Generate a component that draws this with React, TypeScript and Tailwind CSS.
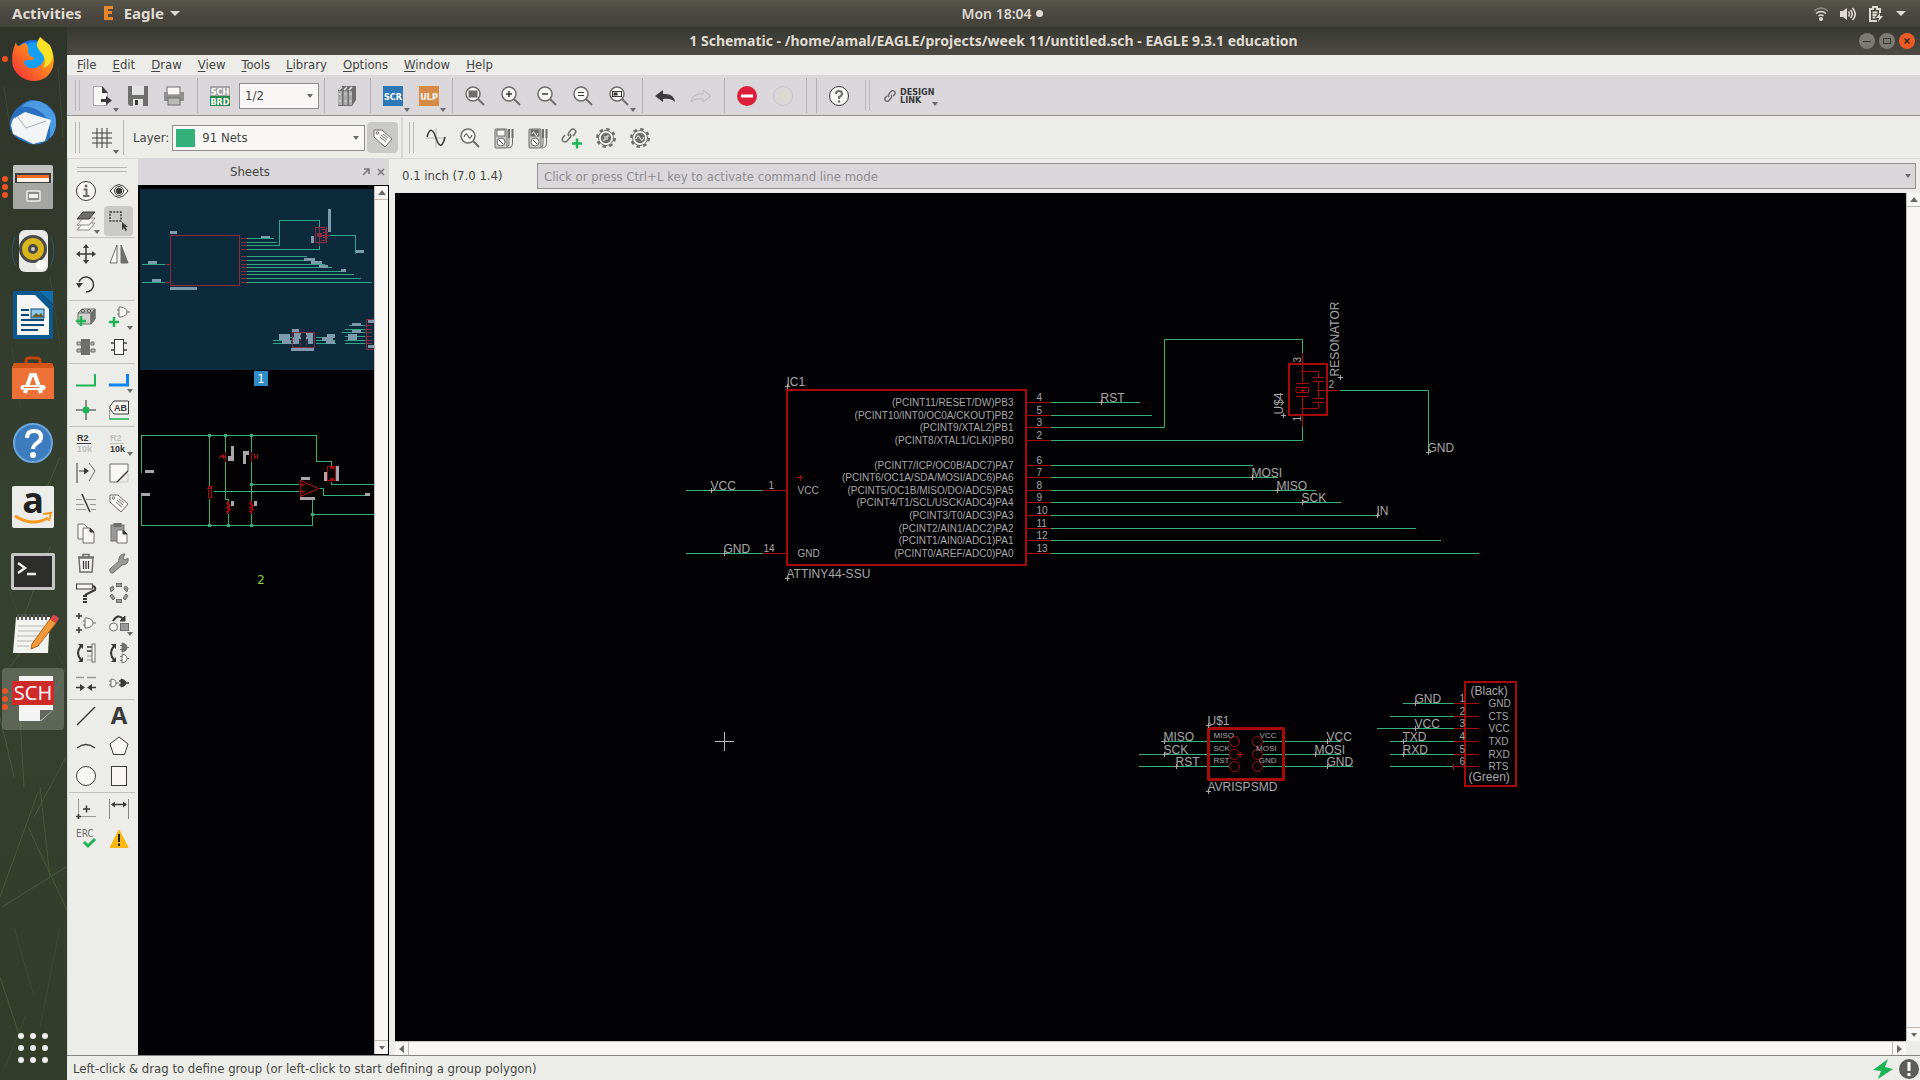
import React from 'react';

interface ChildrenProps {
  children?: React.ReactNode;
}

interface Tool {
  name: string;
  icon: React.ReactNode;
  menu?: boolean;
  active?: boolean;
}

const DARK = '#3a3a3a';
const MID = '#6e6e6c';
const GREEN = '#1eb455';

const Icon: React.FC<ChildrenProps> = ({ children }) => (
  <svg
    viewBox="0 0 20 20"
    className="w-5 h-5 overflow-visible"
    fill="none"
    stroke={DARK}
    strokeWidth="1"
    aria-hidden="true"
  >
    {children}
  </svg>
);

const Arrow: React.FC<{ dir?: 'up' | 'down' | 'left' | 'right' }> = ({
  dir = 'down',
}) => {
  const points = {
    down: '1,2 7,2 4,6',
    up: '0,6 8,6 4,1',
    left: '6,0 6,8 1,4',
    right: '1,0 1,8 6,4',
  };

  return (
    <svg viewBox="0 0 8 8" className="w-2 h-2" aria-hidden="true">
      <polygon points={points[dir]} fill="#6a6a68" />
    </svg>
  );
};

const Magnifier: React.FC<ChildrenProps> = ({ children }) => (
  <Icon>
    <circle cx="8" cy="8" r="7" fill="#f8f7f5" stroke={MID} strokeWidth="1.500" />
    <path d="M13 13l6 6" stroke={MID} strokeWidth="2" />
    {children}
  </Icon>
);

const Tag: React.FC = () => (
  <Icon>
    <path d="M1 2l8 0 10 9-7 8L1 9z" fill="#f8f7f5" stroke={MID} />
    <circle cx="4.500" cy="5" r="1.300" stroke={MID} />
    <path d="M8 7l6 5M7 9l6 5M10 6l5 4" stroke={MID} />
  </Icon>
);

const Meter: React.FC<{ wave?: boolean }> = ({ wave }) => (
  <Icon>
    <rect x="1" y="1" width="12" height="19" rx="1" fill="#c9c8ca" stroke={MID} />
    <rect x="3" y="2" width="8" height="6" fill={wave ? MID : '#f8f7f5'} stroke={MID} />
    {wave && <path d="M4 6q1.500-4 3 0t3-1" stroke="#fff" />}
    <circle cx="7" cy="14" r="4" fill="#f8f7f5" stroke={MID} />
    <path d="M5 12l4 4" />
    <path d="M15 1v9M18.500 1v9" strokeWidth="2" stroke={MID} />
    <path d="M15 10v6q0 3-2 3M18.500 10v5q0 5-5 5" stroke={MID} />
  </Icon>
);

const Gear: React.FC<ChildrenProps> = ({ children }) => (
  <Icon>
    <circle cx="10" cy="10" r="8.500" stroke={MID} strokeWidth="3" strokeDasharray="3.300 3.370" />
    <circle cx="10" cy="10" r="7.500" fill="#f8f7f5" stroke={MID} />
    <circle cx="10" cy="10" r="4.800" fill={MID} stroke={MID} />
    <g stroke="#fff">{children}</g>
  </Icon>
);

const Badge: React.FC<{ text: string; color: string }> = ({ text, color }) => (
  <Icon>
    <rect width="20" height="20" fill={color} stroke="none" />
    <text
      x="10"
      y="14"
      fill="#fff"
      stroke="none"
      textAnchor="middle"
      className="font-['DejaVu_Sans_Condensed'] text-[9px] font-bold"
    >
      {text}
    </text>
  </Icon>
);

const Gate: React.FC<{ x: number; y: number }> = ({ x, y }) => (
  <g transform={`translate(${x} ${y})`} stroke={MID}>
    <path d="M-2 3h2M-2 7h2M8 5h3" />
    <path d="M0 0h2q6 1 6 5t-6 5h-2z" fill="#f8f7f5" />
  </g>
);

const ValueIcon: React.FC<{ top: string; bottom: string }> = ({ top, bottom }) => (
  <Icon>
    <text x="1" y="8" fill={top} stroke="none" className="font-['Liberation_Sans'] text-[9px] font-bold">
      R2
    </text>
    <path d="M1 10.500h14" stroke={top} />
    <text x="1" y="19" fill={bottom} stroke="none" className="font-['Liberation_Sans'] text-[9px] font-bold">
      10k
    </text>
  </Icon>
);

const PALETTE: Tool[][] = [
  [
    {
      name: 'Info',
      icon: (
        <Icon>
          <circle cx="10" cy="10" r="9.500" fill="#f8f7f5" />
          <path d="M7.500 8.500h3V15M7 15h6.500" strokeWidth="2" stroke={MID} />
          <circle cx="10" cy="5" r="1.500" fill={MID} stroke="none" />
        </Icon>
      ),
    },
    {
      name: 'Show',
      icon: (
        <Icon>
          <path d="M1 10q9-13 18 0q-9 13-18 0z" fill="#f8f7f5" />
          <circle cx="10" cy="10" r="4.500" />
          <circle cx="10" cy="10" r="2.800" fill={DARK} />
        </Icon>
      ),
    },
    {
      name: 'Layer settings',
      menu: true,
      icon: (
        <Icon>
          <path d="M7 12h12l-6 7H1z" fill="#f8f7f5" stroke="#8a8a88" />
          <path d="M7 7h12l-6 7H1z" fill="#f8f7f5" stroke="#8a8a88" />
          <path d="M7 1h12l-6 7H1z" fill={MID} />
        </Icon>
      ),
    },
    {
      name: 'Group',
      active: true,
      icon: (
        <Icon>
          <rect x="1" y="1" width="11" height="9" strokeDasharray="2 1.300" strokeWidth="1.500" />
          <path d="M13 11v8l2-2 1.500 3 1.500-1-1.500-3h2.500z" fill={DARK} stroke="none" />
        </Icon>
      ),
    },
  ],
  [
    {
      name: 'Move',
      icon: (
        <Icon>
          <path d="M10 3v14M3 10h14" strokeWidth="1.500" />
          <path d="M10 0l3 4H7zM10 20l3-4H7zM0 10l4-3v6zM20 10l-4-3v6z" fill={DARK} stroke="none" />
        </Icon>
      ),
    },
    {
      name: 'Mirror',
      icon: (
        <Icon>
          <path d="M8 1v18H1z" fill="#f8f7f5" stroke={MID} />
          <path d="M12 1v18h7z" fill={MID} stroke={MID} />
        </Icon>
      ),
    },
    {
      name: 'Rotate',
      icon: (
        <Icon>
          <path d="M3 8a7.500 7.500 0 1 1 7 10" strokeWidth="1.500" />
          <path d="M0 9h7l-4 5z" fill={DARK} stroke="none" />
        </Icon>
      ),
    },
  ],
  [
    {
      name: 'Add part',
      icon: (
        <Icon>
          <path d="M2 6l4-4h13v10l-4 5H2z" fill="#d0cfcf" stroke={MID} />
          <path d="M2 6h13l4-4M15 6v11" stroke={MID} />
          <path d="M15 6l4-4v10l-4 5z" fill={MID} stroke={MID} />
          <ellipse cx="7" cy="4" rx="2" ry="1.200" fill="#fff" />
          <ellipse cx="13" cy="4" rx="2" ry="1.200" fill="#fff" />
          <path d="M0 14h10M5 9v10" stroke={GREEN} strokeWidth="2.500" />
        </Icon>
      ),
    },
    {
      name: 'Add gate',
      menu: true,
      icon: (
        <Icon>
          <Gate x={10} y={0} />
          <path d="M0 15h10M5 10v10" stroke={GREEN} strokeWidth="2.500" />
        </Icon>
      ),
    },
    {
      name: 'Replace part',
      icon: (
        <Icon>
          <path d="M1 5h4v3H1zM1 12h4v3H1zM15 5h3v3h-3zM15 12h4v3h-4z" fill="#b5b5b3" stroke={MID} />
          <rect x="5.500" y="2.500" width="8" height="15" fill={MID} stroke={MID} />
        </Icon>
      ),
    },
    {
      name: 'Part outline',
      icon: (
        <Icon>
          <path d="M2 6h4M2 13h4M14 6h4M14 13h4" strokeWidth="2" stroke={MID} />
          <rect x="5.500" y="2.500" width="9" height="15" fill="#f8f7f5" />
        </Icon>
      ),
    },
  ],
  [
    {
      name: 'Net',
      icon: (
        <Icon>
          <path d="M0 15.500h19V4" stroke={GREEN} strokeWidth="2" />
        </Icon>
      ),
    },
    {
      name: 'Bus',
      menu: true,
      icon: (
        <Icon>
          <path d="M0 15h18.500V4" stroke="#0a84f0" strokeWidth="3" />
        </Icon>
      ),
    },
    {
      name: 'Junction',
      icon: (
        <Icon>
          <path d="M10 0v20M0 10h20" stroke={MID} strokeWidth="1.500" />
          <circle cx="10" cy="10" r="3.500" fill={GREEN} stroke="none" />
        </Icon>
      ),
    },
    {
      name: 'Label',
      icon: (
        <Icon>
          <path d="M5 1h14.500v13H5L1 9V6z" fill="#f8f7f5" />
          <text x="5" y="11" fill={DARK} stroke="none" className="font-['Liberation_Sans'] text-[9px] font-bold">
            AB
          </text>
          <path d="M0 19h20" stroke={GREEN} strokeWidth="1.500" />
          <path d="M0.500 10v8" stroke="#999" />
        </Icon>
      ),
    },
  ],
  [
    { name: 'Name', icon: <ValueIcon top={DARK} bottom="#bfbfbd" /> },
    { name: 'Value', menu: true, icon: <ValueIcon top="#bfbfbd" bottom={DARK} /> },
    {
      name: 'Smash',
      icon: (
        <Icon>
          <path d="M1 0v20M3 8h7" />
          <path d="M8 4.500l5 3.500-5 3.500z" fill={DARK} stroke="none" />
          <path d="M13 0l6 8-6 10" stroke={MID} />
        </Icon>
      ),
    },
    {
      name: 'Miter',
      icon: (
        <Icon>
          <path d="M1 1h18v7l-11 11H1z" fill="#f8f7f5" stroke={MID} />
          <path d="M19 8L8 19" strokeWidth="1.500" />
          <path d="M19 10v9h-9" stroke="#c9c9c5" />
        </Icon>
      ),
    },
    {
      name: 'Split',
      icon: (
        <Icon>
          <path d="M0 6.500h6M10 6.500h10M0 11.500h8M14 11.500h6M0 16.500h10M15 16.500h5" stroke="#999" />
          <path d="M6 1l8 18" strokeWidth="1.500" />
        </Icon>
      ),
    },
    { name: 'Attribute', icon: <Tag /> },
    {
      name: 'Copy',
      icon: (
        <Icon>
          <path d="M2 1h6l4 4v11H2z" fill="#f8f7f5" stroke={MID} />
          <path d="M7 5h7l4 4v11H7z" fill="#f8f7f5" stroke={MID} />
          <path d="M14 5v4h4z" fill={DARK} />
        </Icon>
      ),
    },
    {
      name: 'Paste',
      icon: (
        <Icon>
          <rect x="2" y="2" width="13" height="16" fill="#999" stroke={MID} />
          <rect x="5" y="0.500" width="7" height="3" fill={MID} stroke={MID} />
          <path d="M8 7h6l4 4v9H8z" fill="#f8f7f5" stroke={MID} />
          <path d="M14 7v4h4z" fill={DARK} />
        </Icon>
      ),
    },
    {
      name: 'Delete',
      icon: (
        <Icon>
          <path d="M3 5h14l-1 14H4z" fill="#f8f7f5" stroke={MID} strokeWidth="1.500" />
          <path d="M2 4h16M7 4V1.500h6V4" strokeWidth="1.500" stroke={MID} />
          <path d="M7.500 8v8M10 8v8M12.500 8v8" strokeWidth="1.300" />
        </Icon>
      ),
    },
    {
      name: 'Properties',
      icon: (
        <Icon>
          <path
            d="M1 16L10 8q-1-5 4-7l2 0-2 4 2 2 3-2q1 7-6 7l-9 8q-4 0-3-4z"
            fill="#999"
            stroke={MID}
          />
        </Icon>
      ),
    },
    {
      name: 'Paint',
      icon: (
        <Icon>
          <rect x="0.500" y="1" width="16" height="5" fill="#f8f7f5" />
          <path d="M17 3q3 1 2 4l-10 5" strokeWidth="2" />
          <path d="M9 12v8" strokeWidth="4" strokeDasharray="2 1" />
        </Icon>
      ),
    },
    {
      name: 'Optimize',
      icon: (
        <Icon>
          <g fill="#999" stroke={MID}>
            <rect x="7.500" y="0.500" width="5" height="3" />
            <rect x="7.500" y="16.500" width="5" height="3" />
            <path d="M1 5l3-2 1 3-3 3zM19 5l-3-2-1 3 3 3zM1 13l2-2 3 4-2 2zM19 13l-2-2-3 4 2 2z" />
          </g>
        </Icon>
      ),
    },
    {
      name: 'Invoke',
      icon: (
        <Icon>
          <path d="M0 3h6M3 0v6M0 17h6M3 14v6" strokeWidth="1.500" />
          <Gate x={9} y={5} />
        </Icon>
      ),
    },
    {
      name: 'Replace',
      menu: true,
      icon: (
        <Icon>
          <circle cx="4.500" cy="14" r="4" fill="#f8f7f5" stroke={MID} />
          <rect x="11.500" y="10.500" width="8" height="7" fill="#999" stroke={MID} />
          <path d="M4 8q5-8 10-2" strokeWidth="2" />
          <path d="M16 3v5h-5z" fill={DARK} />
        </Icon>
      ),
    },
    {
      name: 'Pinswap',
      icon: (
        <Icon>
          <path d="M5 3q-6 7 0 14" strokeWidth="2" />
          <path d="M2 1h5v5zM2 19h5v-5z" fill={DARK} stroke="none" />
          <path d="M11 4h5M11 8h5" strokeWidth="1.500" />
          <path d="M11 13h5M11 17h5" stroke="#999" />
          <rect x="16" y="1" width="3" height="18" fill="#f8f7f5" stroke={MID} />
        </Icon>
      ),
    },
    {
      name: 'Gateswap',
      icon: (
        <Icon>
          <path d="M5 3q-6 7 0 14" strokeWidth="2" />
          <path d="M2 1h5v5zM2 19h5v-5z" fill={DARK} stroke="none" />
          <path d="M11 2.500h3M11 6.500h3M18 4.500h2M11 13.500h3M11 17.500h3M18 15.500h2" stroke={MID} />
          <path d="M13 0q5 1 5 4.500t-5 4.500z" fill={MID} stroke={MID} />
          <path d="M13 11q5 1 5 4.500t-5 4.500z" fill="#f8f7f5" stroke={MID} />
        </Icon>
      ),
    },
    {
      name: 'Split net',
      icon: (
        <Icon>
          <path d="M0 4.500h8M11 4.500h9" stroke="#999" strokeWidth="1.500" />
          <path d="M0 14.500h6M14 14.500h6" strokeWidth="1.500" />
          <path d="M4 11l5 3.500-5 3.500zM16 11l-5 3.500 5 3.500z" fill={DARK} stroke="none" />
        </Icon>
      ),
    },
    {
      name: 'Join gates',
      icon: (
        <Icon>
          <path d="M0 8h3M0 12h3M7 10h3" stroke={MID} />
          <path d="M2 6q5 0 5 4t-5 4z" fill="#f8f7f5" stroke={MID} />
          <path d="M10 8h3M10 12h3M17 10h3" strokeWidth="1.500" />
          <path d="M12 6q5 1 5 4t-5 4z" fill={DARK} />
        </Icon>
      ),
    },
  ],
  [
    {
      name: 'Line',
      icon: (
        <Icon>
          <path d="M1 19L19 1" strokeWidth="1.500" />
        </Icon>
      ),
    },
    {
      name: 'Text',
      icon: (
        <Icon>
          <text
            x="10"
            y="18"
            fill={DARK}
            stroke="none"
            textAnchor="middle"
            className="font-['Open_Sans'] text-2xl font-bold"
          >
            A
          </text>
        </Icon>
      ),
    },
    {
      name: 'Arc',
      icon: (
        <Icon>
          <path d="M1 12q9-7 18 0" strokeWidth="1.500" />
        </Icon>
      ),
    },
    {
      name: 'Polygon',
      icon: (
        <Icon>
          <path d="M10 1l9 7-3.500 10.500h-11L1 8z" fill="#f8f7f5" />
        </Icon>
      ),
    },
    {
      name: 'Circle',
      icon: (
        <Icon>
          <circle cx="10" cy="10" r="9.500" fill="#f8f7f5" />
        </Icon>
      ),
    },
    {
      name: 'Rectangle',
      icon: (
        <Icon>
          <rect x="2.500" y="0.500" width="15" height="19" fill="#f8f7f5" />
        </Icon>
      ),
    },
  ],
  [
    {
      name: 'Mark',
      icon: (
        <Icon>
          <path d="M2.500 0v17.500H20" stroke="#999" />
          <path d="M7 10h7M10.500 6.500v7M0 17.500h5M2.500 15v5" strokeWidth="1.500" />
        </Icon>
      ),
    },
    {
      name: 'Dimension',
      icon: (
        <Icon>
          <path d="M0.500 0v20M19.500 0v20" stroke="#888" />
          <path d="M3 5.500h14" strokeWidth="1.500" />
          <path d="M2 5.500l4-3v6zM18 5.500l-4-3v6z" fill={DARK} stroke="none" />
        </Icon>
      ),
    },
    {
      name: 'ERC',
      icon: (
        <Icon>
          <text x="0" y="8" fill={MID} stroke="none" className="font-['DejaVu_Sans_Condensed'] text-[10px]">
            ERC
          </text>
          <path d="M8 13l4 4 7-7" stroke={GREEN} strokeWidth="3" />
        </Icon>
      ),
    },
    {
      name: 'Errors',
      icon: (
        <Icon>
          <path d="M10 1l9 17.500H1z" fill="#fbb80f" stroke="#fbb80f" strokeLinejoin="round" />
          <path d="M10 5v8M10 14.500v2.500" stroke="#222" strokeWidth="2" />
        </Icon>
      ),
    },
  ],
];

const ToolButton: React.FC<Tool> = ({ name, icon, menu, active }) => (
  <button
    type="button"
    aria-label={name}
    className={`relative flex items-center justify-center h-[30px] rounded-sm ${
      active ? 'bg-[#c9c9c5]' : ''
    }`}
  >
    {icon}
    {menu && (
      <span className="absolute -right-px bottom-0">
        <Arrow />
      </span>
    )}
  </button>
);

const BarButton: React.FC<Tool> = ({ name, icon, menu }) => (
  <button type="button" aria-label={name} className="relative flex items-center justify-center w-9 h-9">
    {icon}
    {menu && (
      <span className="absolute right-0 bottom-0">
        <Arrow />
      </span>
    )}
  </button>
);

const Separator: React.FC = () => <div className="w-px h-[35px] mr-1 ml-[5px] bg-[#b3b1b4]" />;

const Handle: React.FC = () => (
  <div className="w-[5px] h-[31px] border-x border-[#b9b8b8]" />
);

const MENUS = ['File', 'Edit', 'Draw', 'View', 'Tools', 'Library', 'Options', 'Window', 'Help'];

const MenuBar: React.FC = () => (
  <nav className="flex items-center gap-4 h-5 px-[10px] bg-[#ecede8]">
    {MENUS.map((menu) => (
      <button key={menu} type="button" className="leading-5">
        <span className="underline underline-offset-2">{menu[0]}</span>
        {menu.slice(1)}
      </button>
    ))}
  </nav>
);

const MainToolbar: React.FC = () => (
  <div className="flex items-center h-[41px] pl-2 pt-px bg-[#d9d7da] border-b border-[#959396]">
    <Handle />
    <div className="flex items-center ml-1">
      <BarButton
        name="Open"
        menu
        icon={
          <Icon>
            <path d="M1.500 0.500h9l5 6v13h-14z" fill="#f8f7f5" stroke="#aaa8ab" />
            <path d="M10 0l6 7h-6zM9 13h5v-3l6 4.500-6 4.500v-3H9z" fill={DARK} stroke="none" />
          </Icon>
        }
      />
      <BarButton
        name="Save"
        icon={
          <Icon>
            <path d="M0 0h20v20H2l-2-2z" fill={MID} stroke="none" />
            <path d="M4 0h12v9H4zM5 13h10v7H5z" fill="#e4e3e4" stroke="none" />
            <path d="M7 14h3v5H7z" fill={DARK} stroke="none" />
          </Icon>
        }
      />
      <BarButton
        name="Print"
        icon={
          <Icon>
            <rect x="3" y="1" width="13" height="8" fill="#f8f7f5" stroke={MID} />
            <path d="M0 6h4v3h12V6h4v9H0z" fill="#8f8f8e" stroke="none" />
            <rect x="4" y="12" width="12" height="7" fill="#b9b9b8" stroke={MID} />
          </Icon>
        }
      />
      <Separator />
      <BarButton
        name="Switch to board"
        icon={
          <Icon>
            <path d="M0 0h20v10H0z" fill="#a3a3a1" stroke="none" />
            <path d="M0 10h20v10H0z" fill="#248a4b" stroke="none" />
            <g fill="#fff" stroke="none" textAnchor="middle" className="font-['DejaVu_Sans_Condensed'] text-[9px] font-bold">
              <text x="10" y="9">SCH</text>
              <text x="10" y="19">BRD</text>
            </g>
          </Icon>
        }
      />
      <div className="relative ml-px">
        <select
          aria-label="Sheet"
          className="appearance-none w-20 h-[26px] px-[5px] bg-[#f8f7f5] border border-[#8f8d90] block"
        >
          <option>1/2</option>
        </select>
        <span className="absolute right-[5px] top-[9px] pointer-events-none">
          <Arrow />
        </span>
      </div>
      <Separator />
      <BarButton
        name="Library"
        icon={
          <Icon>
            <path d="M1 4l4-4h14v14l-4 6H1z" fill={MID} stroke="none" />
            <path d="M1 5h4v14H1zM6.500 5h4v14h-4zM12 5h3v14h-3z" fill="#aaa" stroke="none" />
            <path d="M2 4l3-3M7 4l3-3M12 4l3-3" stroke="#eee" strokeWidth="1.500" />
            <path d="M2 8h2M7.500 8h2M12.500 8h2M2 15h2M7.500 15h2M12.500 15h2" stroke="#eee" />
          </Icon>
        }
      />
      <Separator />
      <BarButton name="Script" menu icon={<Badge text="SCR" color="#2e78b7" />} />
      <BarButton name="ULP" menu icon={<Badge text="ULP" color="#d78946" />} />
      <Separator />
      <BarButton
        name="Zoom to fit"
        icon={
          <Magnifier>
            <rect x="4" y="5" width="8" height="6" fill={MID} stroke={MID} />
          </Magnifier>
        }
      />
      <BarButton
        name="Zoom in"
        icon={
          <Magnifier>
            <path d="M5 8h6M8 5v6" strokeWidth="1.500" />
          </Magnifier>
        }
      />
      <BarButton
        name="Zoom out"
        icon={
          <Magnifier>
            <path d="M5 8h6" strokeWidth="1.500" />
          </Magnifier>
        }
      />
      <BarButton
        name="Redraw"
        icon={
          <Magnifier>
            <path d="M5 6.500h6M5 9.500h6" />
          </Magnifier>
        }
      />
      <BarButton
        name="Zoom select"
        menu
        icon={
          <Magnifier>
            <rect x="3.500" y="5.500" width="9" height="5" />
            <rect x="5" y="7" width="3" height="2" fill={DARK} />
          </Magnifier>
        }
      />
      <Separator />
      <BarButton
        name="Undo"
        icon={
          <Icon>
            <path d="M0 10l8-6v4q11-1 12 8-4-4-12-3v3z" fill={DARK} stroke="none" />
          </Icon>
        }
      />
      <BarButton
        name="Redo"
        icon={
          <Icon>
            <path d="M20 10l-8-6v4q-11-1-12 8 4-4 12-3v3z" stroke="#b9b7b8" />
          </Icon>
        }
      />
      <Separator />
      <BarButton
        name="Stop"
        icon={
          <Icon>
            <circle cx="10" cy="10" r="10" fill="#dc1f3a" stroke="none" />
            <path d="M4 10h12" stroke="#fff" strokeWidth="3" />
          </Icon>
        }
      />
      <BarButton
        name="Go"
        icon={
          <Icon>
            <circle cx="10" cy="10" r="9.500" stroke="#c7c5c6" />
            <path d="M5 7h4v6H5M15 7h-4v6h4" stroke="#e8d5c0" />
          </Icon>
        }
      />
      <Separator />
      <Separator />
      <BarButton
        name="Help"
        icon={
          <Icon>
            <circle cx="10" cy="10" r="9.500" fill="#f8f7f5" />
            <path d="M7 8q0-3 3-3t3 2.500-3 3.500v2" stroke={MID} strokeWidth="2" />
            <circle cx="10" cy="15.500" r="1.200" fill={MID} stroke="none" />
          </Icon>
        }
      />
      <div className="ml-2 mr-[14px]">
        <Handle />
      </div>
      <button type="button" className="relative flex items-center gap-1 pr-3 text-[#3a3a3a]">
        <svg viewBox="0 0 12 12" className="w-3 h-3" fill="none" stroke={MID} strokeWidth="1.500" aria-hidden="true">
          <path d="M5 7a2 2 0 0 1 0-3l2-2.500a2 2 0 0 1 3.500 3L9 6M7 5a2 2 0 0 1 0 3L5 10.500a2 2 0 0 1-3.500-3L3 6" />
        </svg>
        <span className="text-[9px] leading-2 font-bold text-left">
          DESIGN
          <br />
          LINK
        </span>
        <span className="absolute right-2 -bottom-1">
          <Arrow />
        </span>
      </button>
    </div>
  </div>
);

const LayerToolbar: React.FC = () => (
  <div className="flex items-center h-[43px] pl-2 pt-px bg-[#ecede8] border-b border-[#d9d7da]">
    <Handle />
    <div className="flex items-center ml-1">
      <BarButton
        name="Grid"
        menu
        icon={
          <Icon>
            <path d="M5 0v20M10 0v20M15 0v20M0 5h20M0 10h20M0 15h20" />
          </Icon>
        }
      />
      <div className="w-px h-[35px] ml-[3px] bg-[#b9b8b8]" />
      <label htmlFor="layer" className="ml-[9px] mr-[3px]">
        Layer:
      </label>
      <div className="relative">
        <select
          id="layer"
          className="appearance-none block w-[193px] h-[26px] pl-[29px] bg-[#f8f7f5] border border-[#8f8d90]"
        >
          <option>91 Nets</option>
        </select>
        <span className="absolute left-1 top-1 w-[19px] h-[18px] bg-[#34b07c] pointer-events-none" />
        <span className="absolute right-[5px] top-[9px] pointer-events-none">
          <Arrow />
        </span>
      </div>
      <button
        type="button"
        aria-label="Attributes"
        className="flex items-center justify-center w-[31px] h-[31px] ml-[2px] bg-[#c9c9c5] rounded-sm"
      >
        <Tag />
      </button>
    </div>
    <div className="w-[2px] h-full ml-[3px] mr-[6px] bg-[#d9d7da]" />
    <Handle />
    <div className="flex items-center gap-[14px] ml-3">
      <button type="button" aria-label="Simulate">
        <Icon>
          <path d="M10 0v20M0 10h20" stroke="#b9b8b8" />
          <path d="M1 9q4-14 9 1t9-1" strokeWidth="1.500" />
        </Icon>
      </button>
      <button type="button" aria-label="Probe">
        <Magnifier>
          <path d="M4 9q2-6 4-1t4-1" />
        </Magnifier>
      </button>
      <button type="button" aria-label="Voltage source">
        <Meter />
      </button>
      <button type="button" aria-label="Waveform source">
        <Meter wave />
      </button>
      <button type="button" aria-label="Add model">
        <Icon>
          <path
            d="M7 8a2.500 2.500 0 0 1 0-3.500l2-2.500a2.500 2.500 0 0 1 4 3.500L11 8M8 6a2.500 2.500 0 0 1 0 3.500L5 13a2.500 2.500 0 0 1-4-3.500L3 7"
            stroke={MID}
            strokeWidth="1.500"
          />
          <path d="M10 15.500h10M15 10.500v10" stroke={GREEN} strokeWidth="2.500" />
        </Icon>
      </button>
      <button type="button" aria-label="Operating point">
        <Gear>
          <path d="M7 12h2V8M11 12V8h2" />
        </Gear>
      </button>
      <button type="button" aria-label="Analysis">
        <Gear>
          <path d="M6 11q2-6 4-1t4-1" />
        </Gear>
      </button>
    </div>
  </div>
);

const ToolPalette: React.FC = () => (
  <aside className="w-[71px] shrink-0 pl-[3px] pr-[5px] pt-2 border-l border-[#d9d7da]">
    <div className="h-[5px] mx-[6px] mb-1 border-y border-[#b9b8b8]" />
    {PALETTE.map((group, index) => (
      <div key={group[0].name}>
        {index > 0 && <div className="h-px my-px -mx-[2px] bg-[#c2c2be]" />}
        <div className="grid grid-cols-2 gap-x-1">
          {group.map((tool) => (
            <ToolButton key={tool.name} {...tool} />
          ))}
        </div>
      </div>
    ))}
  </aside>
);

const Scrollbar: React.FC<{ horizontal?: boolean }> = ({ horizontal }) => (
  <div
    className={`flex justify-between shrink-0 bg-[#f8f7f5] border-[#c6bfb9] ${
      horizontal ? 'h-[14px] border-t' : 'w-[14px] flex-col border-l'
    }`}
  >
    <button
      type="button"
      aria-label="Scroll back"
      className={`flex items-center justify-center border-[#c6b8ae] ${
        horizontal ? 'w-[14px] border-r' : 'h-[14px] border-b'
      }`}
    >
      <Arrow dir={horizontal ? 'left' : 'up'} />
    </button>
    <button
      type="button"
      aria-label="Scroll forward"
      className={`flex items-center justify-center border-[#c6b8ae] ${
        horizontal ? 'w-[14px] border-l' : 'h-[14px] border-t'
      }`}
    >
      <Arrow dir={horizontal ? 'right' : 'down'} />
    </button>
  </div>
);

const SheetOne: React.FC = () => (
  <svg viewBox="140 189 234 181" className="w-full" fill="none" shapeRendering="crispEdges" aria-hidden="true">
    <g transform="translate(0.5 0.5)">
      <g stroke="#2fa888">
        <path d="M141 264h23M141 282h23M246 238h27M246 242h30M246 245h33V220h40v6M246 249h73v-4" />
        <path d="M246 256h60M246 260h64M246 264h78M246 267h85M246 271h99M246 274h107M246 278h114M246 282h125" />
        <path d="M329 235h26v18M279 337h14M272 340h21M272 343h21M315 337h19M315 340h19M315 343h20" />
        <path d="M348 325h16M344 329h20M341 332h23M344 336h20M344 340h20M344 343h20" />
      </g>
      <g stroke="#8a2c40">
        <rect x="170" y="235" width="69" height="50" />
        <path d="M164 264h6M164 282h6M240 238h6M240 242h6M240 245h6M240 249h6M240 256h6M240 260h6M240 264h6M240 267h6M240 271h6M240 274h6M240 278h6M240 282h6" />
        <rect x="315" y="227" width="11" height="15" />
        <path d="M319 226v19M320 229h5v11h-5M321 235h8M322 232h5M322 237h5" />
        <rect x="317" y="233" width="4" height="3" fill="#8a2c40" />
        <rect x="292" y="332" width="22" height="15" />
        <path d="M374 319h-8v30h8M364 325h7M364 329h7M364 332h7M364 336h7M364 340h7M364 343h7" />
      </g>
    </g>
    <g fill="#7e9bae">
      <path d="M170 231h7v3h-7zM170 287h27v3h-27zM261 236h9v2h-9zM328 209h3v23h-3zM311 236h3v7h-3zM356 250h8v3h-8z" />
      <path d="M304 258h11v3h-11zM311 261h11v3h-11zM319 265h9v3h-9zM341 269h5v3h-5zM148 261h9v3h-9zM152 279h9v3h-9z" />
      <path d="M279 334h11v6h-11zM282 340h9v4h-9zM294 333h7v6h-2v5h-6zM306 333h7v11h-5v-5h-2zM327 334h8v4h-8zM322 337h11v4h-11zM326 341h9v3h-9z" />
      <path d="M292 329h7v3h-7zM291 348h23v3h-23zM352 323h9v3h-9zM352 330h9v3h-9zM348 334h9v6h-9zM368 320h6v3h-6zM368 345h6v3h-6z" />
    </g>
    <path d="M300 335v10M306 335v10" stroke="#8a2c40" strokeDasharray="2 2" />
  </svg>
);

const SheetTwo: React.FC = () => (
  <svg viewBox="140 430 234 100" className="w-full" fill="none" shapeRendering="crispEdges" aria-hidden="true">
    <g transform="translate(0.5 0.5)">
      <g stroke="#34b07c">
        <path d="M141 472v-37h175v26h15v4M141 495v30h171v-26M209 435v50M209 498v27" />
        <path d="M225 435v16M225 461v38h3v2M228 513v12M251 435v16M251 461v40M251 513v12M251 484h47M213 491h85" />
        <path d="M319 488h4v7h42M331 481v3h43M312 514h62" />
      </g>
      <g stroke="#a80a0a">
        <path d="M300 480v16l18-8zM298 484h6M298 491h6M302 482v4M302 489v4" />
        <rect x="208" y="486" width="3" height="11" />
        <path d="M206 488h4v-3M225 451v10M251 451v10M219 457l4-3v4M220 456h5M253 454l3 4M254 453v5M257 453v5" />
        <path d="M228 501l-1 2 2 2-2 2 2 2-2 2 1 2M251 501l-1 2 2 2-2 2 2 2-2 2 1 2" strokeWidth="2" />
        <rect x="327" y="466" width="8" height="14" />
        <path d="M329 467h4M329 478h4" strokeWidth="2" />
      </g>
    </g>
    <g fill="#34b07c">
      <path d="M208 434h3v3h-3zM224 434h3v3h-3zM250 434h3v3h-3zM208 524h3v3h-3zM227 524h3v3h-3zM250 524h3v3h-3zM250 483h3v3h-3zM311 513h3v3h-3z" />
    </g>
    <g fill="#a8a8a8">
      <path d="M145 470h9v3h-9zM141 493h9v3h-9zM231 446h3v15h-6v-5h3zM243 451h6v4h-3v9h-3zM231 501h3v5h-3zM254 501h3v5h-3z" />
      <path d="M301 477h9v3h-9zM300 497h15v3h-15zM365 493h5v3h-5zM324 472h3v9h-3zM336 466h3v15h-3z" />
    </g>
  </svg>
);

const SheetsPanel: React.FC = () => (
  <section className="flex flex-col w-[251px] shrink-0">
    <header className="flex items-center h-[26px] pr-1 bg-[#d9d7da]">
      <h2 className="flex-1 text-center">Sheets</h2>
      <button type="button" aria-label="Float" className="w-[15px]">
        <svg viewBox="0 0 8 8" className="w-2 h-2" fill="none" stroke="#777" strokeWidth="1.500" aria-hidden="true">
          <path d="M1 7l6-6M2 1h5v5" />
        </svg>
      </button>
      <button type="button" aria-label="Close">
        <svg viewBox="0 0 8 8" className="w-2 h-2" fill="none" stroke="#777" strokeWidth="1.500" aria-hidden="true">
          <path d="M1 1l6 6M7 1L1 7" />
        </svg>
      </button>
    </header>
    <div className="flex flex-1 min-h-0 pl-[2px] pt-px pr-px pb-px bg-[#020103]">
      <div className="flex-1 min-w-0 pt-[3px]">
        <figure className="flex flex-col items-center">
          <div className="w-full bg-[#0d2a3d]">
            <SheetOne />
          </div>
          <figcaption className="w-[14px] h-[15px] mt-px ml-2 bg-[#308cc6] text-white leading-[15px] text-center">
            1
          </figcaption>
        </figure>
        <figure className="flex flex-col items-center mt-11">
          <SheetTwo />
          <figcaption className="mt-10 ml-2 text-[#8fcf2f]">2</figcaption>
        </figure>
      </div>
      <Scrollbar />
    </div>
  </section>
);

const PINS = [
  { y: 402, pad: '4', name: '(PCINT11/RESET/DW)PB3' },
  { y: 415, pad: '5', name: '(PCINT10/INT0/OC0A/CKOUT)PB2' },
  { y: 427, pad: '3', name: '(PCINT9/XTAL2)PB1' },
  { y: 440, pad: '2', name: '(PCINT8/XTAL1/CLKI)PB0' },
  { y: 465, pad: '6', name: '(PCINT7/ICP/OC0B/ADC7)PA7' },
  { y: 477, pad: '7', name: '(PCINT6/OC1A/SDA/MOSI/ADC6)PA6' },
  { y: 490, pad: '8', name: '(PCINT5/OC1B/MISO/DO/ADC5)PA5' },
  { y: 502, pad: '9', name: '(PCINT4/T1/SCL/USCK/ADC4)PA4' },
  { y: 515, pad: '10', name: '(PCINT3/T0/ADC3)PA3' },
  { y: 528, pad: '11', name: '(PCINT2/AIN1/ADC2)PA2' },
  { y: 540, pad: '12', name: '(PCINT1/AIN0/ADC1)PA1' },
  { y: 553, pad: '13', name: '(PCINT0/AREF/ADC0)PA0' },
];

const LABELS = [
  { x: 711, y: 490, text: 'VCC' },
  { x: 724, y: 553, text: 'GND' },
  { x: 787, y: 386, text: 'IC1' },
  { x: 787, y: 578, text: 'ATTINY44-SSU' },
  { x: 1101, y: 402, text: 'RST' },
  { x: 1252, y: 477, text: 'MOSI' },
  { x: 1277, y: 490, text: 'MISO' },
  { x: 1302, y: 502, text: 'SCK' },
  { x: 1377, y: 515, text: 'IN' },
  { x: 1428, y: 452, text: 'GND' },
  { x: 1208, y: 725, text: 'U$1' },
  { x: 1208, y: 791, text: 'AVRISPSMD' },
  { x: 1164, y: 741, text: 'MISO' },
  { x: 1164, y: 754, text: 'SCK' },
  { x: 1176, y: 766, text: 'RST' },
  { x: 1327, y: 741, text: 'VCC' },
  { x: 1315, y: 754, text: 'MOSI' },
  { x: 1327, y: 766, text: 'GND' },
  { x: 1415, y: 703, text: 'GND' },
  { x: 1415, y: 728, text: 'VCC' },
  { x: 1403, y: 741, text: 'TXD' },
  { x: 1403, y: 754, text: 'RXD' },
];

const HEADER_PINS = [
  { y: 703, pad: '1', name: 'GND', start: 1403 },
  { y: 716, pad: '2', name: 'CTS', start: 1390 },
  { y: 728, pad: '3', name: 'VCC', start: 1377 },
  { y: 741, pad: '4', name: 'TXD', start: 1390 },
  { y: 754, pad: '5', name: 'RXD', start: 1390 },
  { y: 766, pad: '6', name: 'RTS', start: 1390 },
];

const ISP_ROWS = [
  { y: 741, left: 'MISO', right: 'VCC' },
  { y: 754, left: 'SCK', right: 'MOSI' },
  { y: 766, left: 'RST', right: 'GND' },
];

const Schematic: React.FC = () => (
  <svg className="flex-1 min-w-0 h-full bg-[#020103] font-['Liberation_Sans',sans-serif]" fill="none">
    {/* wires sit on half pixels so that they stay crisp */}
    <g transform="translate(-394.5 -192.5)" strokeLinecap="square">
      <g stroke="#34b07c">
        <path d="M686 490h77M686 553h77M1051 402h88M1051 415h100M1051 427h113V339h138v14M1051 440h251v-13" />
        <path d="M1051 465h201M1051 477h226M1051 490h264M1051 502h289M1051 515h328M1051 528h364M1051 540h389M1051 553h427" />
        <path d="M1340 390h88v62M1161 741h67M1139 754h89M1139 766h89M1263 741h77M1263 754h77M1263 766h89" />
        {HEADER_PINS.map(({ y, start }) => (
          <path key={y} d={`M${start} ${y}H1453`} />
        ))}
      </g>

      <g stroke="#a80a0a">
        <path d="M763 490h23M763 553h23M797 477h5M800 475v5" />
        {PINS.map(({ y }) => (
          <path key={y} d={`M1027 ${y}h23`} />
        ))}
        <path d="M1302 353v30M1296 383h12M1296 387h12v5h-12zM1300 390h5M1302 388v4M1296 396h12M1302 396v30" />
        <path d="M1301 371h17v6M1313 377h10M1313 381h10M1318 381v17M1313 398h10M1313 402h10M1318 402v6h-17M1317 390h22" />
        <rect x="1208" y="728" width="75" height="51" strokeWidth="3" strokeLinejoin="round" />
        {ISP_ROWS.map(({ y }) => (
          <g key={y}>
            <circle cx="1234" cy={y} r="5" />
            <circle cx="1257" cy={y} r="5" />
          </g>
        ))}
        <path d="M1237 754h5M1240 752v4" />
        {HEADER_PINS.map(({ y }) => (
          <path key={y} d={`M1454 ${y}h24`} />
        ))}
        <path d="M1453 764v5" />
      </g>

      <path
        d={LABELS.map(({ x, y }) => `M${x - 2} ${y}h4M${x} ${y - 2}v4`).join('')}
        stroke="#a8a8a8"
      />
      <path d="M1338 377h4M1340 375v4M1281 415h4M1283 413v4" stroke="#a8a8a8" />
      <path d="M715 741h18M724 732v18" stroke="#b8b8b8" />
    </g>

    <g transform="translate(-395 -193)" stroke="#a80a0a" strokeWidth="2">
      <rect x="787" y="390" width="239" height="175" />
      <rect x="1289" y="364" width="38" height="51" />
      <rect x="1465" y="682" width="51" height="104" />
    </g>

    <g transform="translate(-395.5 -193.5)" fill="#a8a8a8">
      <g className="text-xs">
        {LABELS.map(({ x, y, text }) => (
          <text key={`${x}-${y}`} x={x} y={y}>
            {text}
          </text>
        ))}
        <text transform="translate(1339 377) rotate(-90)">RESONATOR</text>
        <text transform="translate(1283 415) rotate(-90)">U$4</text>
        <text x="1471" y="695">(Black)</text>
        <text x="1469" y="781">(Green)</text>
      </g>

      <g className="text-[10px]">
        {PINS.map(({ y, pad, name }) => (
          <g key={pad}>
            <text x="1037" y={y - 1}>{pad}</text>
            <text x="1014" y={y + 4} textAnchor="end">{name}</text>
          </g>
        ))}
        {HEADER_PINS.map(({ y, pad, name }) => (
          <g key={pad}>
            <text x="1460" y={y - 1}>{pad}</text>
            <text x="1489" y={y + 4}>{name}</text>
          </g>
        ))}
        <text x="769" y="489">1</text>
        <text x="764" y="552">14</text>
        <text x="798" y="494">VCC</text>
        <text x="798" y="557">GND</text>
        <text transform="translate(1301 363) rotate(-90)">3</text>
        <text transform="translate(1301 422) rotate(-90)">1</text>
        <text x="1329" y="388">2</text>
      </g>

      <g className="text-[8px]">
        {ISP_ROWS.map(({ y, left, right }) => (
          <g key={y}>
            <text x="1214" y={y - 3}>{left}</text>
            <text x="1277" y={y - 3} textAnchor="end">{right}</text>
          </g>
        ))}
      </g>
    </g>
  </svg>
);

const Editor: React.FC = () => (
  <main className="flex flex-col flex-1 min-w-0">
    <div className="flex items-center h-[34px] pl-[13px] pr-1">
      <output className="w-[135px] shrink-0">0.1 inch (7.0 1.4)</output>
      <div className="relative flex-1">
        <input
          type="text"
          aria-label="Command line"
          placeholder="Click or press Ctrl+L key to activate command line mode"
          className="block w-full h-[26px] px-[6px] bg-[#d9d7da] border border-[#959396] placeholder:text-[#8f8d90]"
        />
        <span className="absolute right-1 top-[9px]">
          <Arrow />
        </span>
      </div>
    </div>
    <div className="flex flex-1 min-h-0 pl-[6px]">
      <Schematic />
      <Scrollbar />
    </div>
    <div className="pl-[6px] pr-[14px]">
      <Scrollbar horizontal />
    </div>
  </main>
);

const StatusBar: React.FC = () => (
  <footer className="flex items-center h-[25px] pl-[6px] pr-px pt-px bg-[#ecede8] border-t border-[#858385]">
    <p className="flex-1">
      Left-click &amp; drag to define group (or left-click to start defining a group polygon)
    </p>
    <div className="flex gap-[6px]">
      <Icon>
        <path d="M15 0L0 11l8 1-3 8 15-10-8-2z" fill={GREEN} stroke="none" />
      </Icon>
      <Icon>
        <circle cx="10" cy="10" r="10" fill="#5c5c5a" stroke="none" />
        <path d="M10 3v9M10 14v3" stroke="#fff" strokeWidth="3" />
      </Icon>
    </div>
  </footer>
);

const LAUNCHERS = [
  {
    name: 'Firefox',
    windows: 1,
    icon: (
      <>
        <circle cx="24" cy="25" r="20" fill="#1c6fe0" />
        <circle cx="26" cy="21" r="14" fill="#16a0f5" />
        <path d="M7 7q-6 14-3 25 6 13 20 14 15 0 20-14 3-12-4-20-3-6-9-10 0 8 4 13 3 12-6 17-10 4-14-4-1-3 5-3 4 1 6-2-6-1-7-6 1-4-2-9-5 1-6 3-4 0-4-4z" fill="url(#fox)" />
        <path d="M31 2q-6 8 0 14 8 8 3 17 8-3 10-10 0-12-7-16-4-1-6-5z" fill="#ffe226" />
      </>
    ),
  },
  {
    name: 'Thunderbird',
    windows: 0,
    icon: (
      <>
        <path d="M21 1q18 0 25 14 4 16-8 27-12 7-24 0Q-1 36 1 22 4 8 21 1z" fill="#2b6fc0" />
        <path d="M12 8q9-9 20-5 16 8 15 23-1 9-6 13 2-20-11-27-8-5-18-4z" fill="#4b9be3" />
        <path d="M4 20l12-7 26 8-6 21-12 3L4 35l-2-9z" fill="#f3f4f6" />
        <path d="M8 17l9 12 20-7" fill="none" stroke="#aab" />
      </>
    ),
  },
  {
    name: 'Files',
    windows: 3,
    icon: (
      <>
        <rect x="4" y="2" width="40" height="44" rx="2" fill="#c2c2c0" />
        <path d="M6 10h36v12H6z" fill="#3a3a3a" />
        <path d="M8 12h32v6H8z" fill="#f06a28" />
        <path d="M8 15h32v4H8z" fill="#fff3e6" />
        <path d="M4 20h40v24q0 2-2 2H6q-2 0-2-2z" fill="#a6a6a5" />
        <rect x="18" y="28" width="13" height="10" rx="1" fill="#8a8a89" stroke="#eee" strokeWidth="1.500" />
        <rect x="20" y="31" width="9" height="4" fill="#eee" />
      </>
    ),
  },
  {
    name: 'Rhythmbox',
    windows: 0,
    icon: (
      <>
        <path d="M6 10q-6 14 0 28M42 10q6 14 0 28" fill="none" stroke="#2b5878" />
        <rect x="10" y="3" width="29" height="42" rx="6" fill="#e9e9e7" />
        <circle cx="24" cy="22" r="14" fill="#4a4a48" />
        <circle cx="24" cy="22" r="11" fill="#d9b51c" />
        <circle cx="24" cy="22" r="5" fill="#4a4a48" />
        <circle cx="24" cy="22" r="2" fill="#ccc" />
        <circle cx="32" cy="38" r="5" fill="#fff" />
      </>
    ),
  },
  {
    name: 'LibreOffice Writer',
    windows: 0,
    icon: (
      <>
        <path d="M6 0h24l14 14v34H6q-2 0-2-2V2q0-2 2-2z" fill="#0a5a91" />
        <path d="M8 4h18l14 14v26H8z" fill="#f5f5f5" />
        <path d="M30 0h14v13z" fill="#0f6fae" />
        <path d="M12 19h8M12 24h8M12 29h23M12 34h23M12 39h17" stroke="#0a4a7a" strokeWidth="2" />
        <rect x="22" y="18" width="13" height="9" fill="#8ec5ea" stroke="#0a4a7a" />
        <path d="M23 26l4-4 3 2 2-2 3 4z" fill="#6b5a2c" />
      </>
    ),
  },
  {
    name: 'Ubuntu Software',
    windows: 0,
    icon: (
      <>
        <path d="M17 14V6q0-3 3-3h8q3 0 3 3v8" fill="none" stroke="#c1440e" strokeWidth="3" />
        <path d="M5 8h38l2 5v31H3V13z" fill="#ee7238" />
        <path d="M5 8h38l2 5H3z" fill="#d2551a" />
        <path d="M16 38l6-18h4l6 18" fill="none" stroke="#fff" strokeWidth="4" />
        <path d="M14 32.500h20" stroke="#fff" strokeWidth="5" strokeLinecap="round" />
        <path d="M15 32.500h15" stroke="#ee7238" />
      </>
    ),
  },
  {
    name: 'Help',
    windows: 0,
    icon: (
      <>
        <circle cx="24" cy="24" r="19" fill="#3e7cc0" stroke="#6aa5dc" strokeWidth="2" />
        <path d="M18 19q0-7 7-7t7 6q0 4-4 6-4 3-4 6" fill="none" stroke="#fff" strokeWidth="4" />
        <circle cx="24" cy="36" r="3" fill="#fff" />
      </>
    ),
  },
  {
    name: 'Amazon',
    windows: 0,
    icon: (
      <>
        <rect x="3" y="3" width="42" height="42" rx="2" fill="#ececea" />
        <text x="24" y="30" textAnchor="middle" fill="#222" className="font-['Open_Sans'] text-4xl font-bold">
          a
        </text>
        <path d="M6 33q17 11 33 2" fill="none" stroke="#f79a1c" strokeWidth="3" />
        <path d="M34 31l8-1-2 8" fill="none" stroke="#f79a1c" strokeWidth="2" />
      </>
    ),
  },
  {
    name: 'Terminal',
    windows: 0,
    icon: (
      <>
        <rect x="2" y="6" width="44" height="37" rx="2" fill="#c5c5c3" />
        <rect x="5" y="9" width="38" height="31" fill="#2d2e2c" />
        <path d="M9 16l7 5-7 5M18 27h9" fill="none" stroke="#eee" strokeWidth="2.500" />
      </>
    ),
  },
  {
    name: 'Text Editor',
    windows: 0,
    icon: (
      <>
        <path d="M7 6h34l-2 36H4z" fill="#f2f2ef" />
        <path d="M9 3v6M13 3v6M17 3v6M21 3v6M25 3v6M29 3v6M33 3v6M37 3v6" stroke="#555" strokeWidth="2" />
        <path d="M9 15h26M9 20h25M8 25h22M8 30h18M8 35h12" stroke="#b5b5b3" />
        <path d="M23 33L41 8l6 4-18 23-7 3z" fill="#f39a3c" stroke="#b3611a" />
        <path d="M41 8l3-4q4 0 6 4l-3 4z" fill="#d94a4a" />
      </>
    ),
  },
  {
    name: 'Eagle Schematic',
    windows: 3,
    active: true,
    icon: (
      <>
        <path d="M10 1h34v34L32 46H10z" fill="#f4f4f4" />
        <path d="M31 46V35h13z" fill="#66675f" />
        <rect x="3" y="6" width="42" height="24" fill="#cf2a2a" />
        <text x="24" y="25" textAnchor="middle" fill="#fff" className="font-['Open_Sans'] text-xl">
          SCH
        </text>
      </>
    ),
  },
];

const Dock: React.FC = () => (
  <nav className="relative flex flex-col items-center w-[67px] shrink-0 bg-linear-to-b from-[#30352b] via-[#36412f] to-[#333d2a]">
    <svg className="absolute inset-0 w-full h-full" viewBox="0 0 67 1053" preserveAspectRatio="none" fill="none" aria-hidden="true">
      <path d="M0 870L38 765M2 880L66 840M28 800l40 85M0 690l14 60M20 690l4 70M40 760l10 90M34 790l32-60M0 950l20 60M50 520L20 600M60 430L30 500M10 640l30-40" stroke="#475a36" />
      <path d="M4 60l6 40M58 40l5 70M12 320l8 60M50 250l10 70M14 900l20 70M60 900L40 1000M5 1040l20-50M66 640L44 690M8 560l20 50M46 600l18 40" stroke="#3e4934" />
    </svg>
    {LAUNCHERS.map(({ name, icon, windows, active }) => (
      <button key={name} type="button" aria-label={name} className="relative flex items-center justify-center w-full h-16 pr-[2px]">
        <span className={`flex items-center justify-center rounded w-[62px] h-[62px] ${active ? 'bg-white/20' : ''}`}>
          <svg viewBox="0 0 48 48" className="w-12 h-12 overflow-visible" aria-hidden="true">
            <defs>
              <linearGradient id="fox" x1="1" y1="0" x2="0" y2="1">
                <stop offset="0" stopColor="#ffcb1f" />
                <stop offset="0.500" stopColor="#ff7b22" />
                <stop offset="1" stopColor="#f0243c" />
              </linearGradient>
            </defs>
            {icon}
          </svg>
        </span>
        <span className="absolute left-[2px] inset-y-0 flex flex-col justify-center gap-[2px]">
          {Array.from({ length: windows }, (_, i) => (
            <span key={i} className="w-[6px] h-[6px] rounded-full bg-[#e95420]" />
          ))}
        </span>
      </button>
    ))}
    <button type="button" aria-label="Show Applications" className="relative grid grid-cols-3 gap-[6px] mt-auto mb-[17px] mr-px">
      {Array.from({ length: 9 }, (_, i) => (
        <span key={i} className="w-[6px] h-[6px] rounded-full bg-[#eee]" />
      ))}
    </button>
  </nav>
);

const TopBar: React.FC = () => (
  <header className="grid grid-cols-3 items-center h-[27px] pl-3 pr-2 bg-linear-to-b from-[#57564b] via-[#4c4843] to-[#434238] text-[#dfdbd2] font-['Noto_Sans',sans-serif] text-sm font-semibold">
    <div className="flex items-center gap-[22px] text-[15px] font-bold">
      <button type="button">Activities</button>
      <button type="button" className="flex items-center gap-[10px]">
        <svg viewBox="0 0 10 14" className="w-[10px] h-[14px]" aria-hidden="true">
          <path d="M0 0h9v3H4v2h4v3H4v3h5v3H0z" fill="#e8842a" />
        </svg>
        <span className="flex items-center gap-[6px]">
          Eagle
          <svg viewBox="0 0 10 5" className="w-[10px] h-[5px]" aria-hidden="true">
            <path d="M0 0h10L5 5z" fill="#dfdbd2" />
          </svg>
        </span>
      </button>
    </div>
    <button type="button" className="flex items-center justify-center gap-1 pl-20">
      Mon 18:04
      <span className="w-[7px] h-[7px] rounded-full bg-[#dfdbd2]" />
    </button>
    <div className="flex items-center justify-end gap-3 pr-[6px]">
      <svg viewBox="0 0 14 14" className="w-[14px] h-[14px]" fill="none" stroke="#dfdbd2" strokeWidth="1.500" aria-hidden="true">
        <path d="M0 4q7-6 14 0" stroke="#8b8880" />
        <path d="M2 6.500q5-4 10 0M4.500 9q2.500-2 5 0" />
        <circle cx="7" cy="12" r="2" fill="#dfdbd2" stroke="none" />
      </svg>
      <svg viewBox="0 0 16 14" className="w-4 h-[14px]" fill="none" stroke="#dfdbd2" strokeWidth="1.500" aria-hidden="true">
        <path d="M0 4h3l4-3v12L3 10H0z" fill="#dfdbd2" stroke="none" />
        <path d="M8.500 4.500q2 2.500 0 5M10.500 3q3.500 4 0 8M12.500 1q5.500 6 0 12" />
      </svg>
      <svg viewBox="0 0 16 16" className="w-4 h-4" fill="none" stroke="#dfdbd2" strokeWidth="2" aria-hidden="true">
        <path d="M9 15H2V3h3V1h4v2h3v4M4.500 6.500h5M4.500 9h4M4.500 11.500h3" />
        <path d="M12 7l-4 5h3l-1 4 5-6h-3z" fill="#dfdbd2" stroke="none" />
      </svg>
      <svg viewBox="0 0 10 5" className="w-[10px] h-[5px]" aria-hidden="true">
        <path d="M0 0h10L5 5z" fill="#dfdbd2" />
      </svg>
    </div>
  </header>
);

const TitleBar: React.FC = () => (
  <div className="relative flex items-center justify-center h-7 bg-linear-to-b from-[#373933] via-[#42413b] to-[#4e4a44] text-[#dfdbd2] font-['Noto_Sans',sans-serif] text-sm font-bold">
    <h1>1 Schematic - /home/amal/EAGLE/projects/week 11/untitled.sch - EAGLE 9.3.1 education</h1>
    <div className="absolute right-[5px] inset-y-0 flex items-center gap-1">
      <button type="button" aria-label="Minimize" className="w-4 h-4 rounded-full bg-[#7b7a74]">
        <svg viewBox="0 0 16 16" fill="none" stroke="#3a3a36" aria-hidden="true">
          <path d="M4 8.500h8" />
        </svg>
      </button>
      <button type="button" aria-label="Maximize" className="w-4 h-4 rounded-full bg-[#7b7a74]">
        <svg viewBox="0 0 16 16" fill="none" stroke="#3a3a36" aria-hidden="true">
          <rect x="4.500" y="5.500" width="7" height="5" />
        </svg>
      </button>
      <button type="button" aria-label="Close window" className="w-4 h-4 rounded-full bg-[#ee5a24]">
        <svg viewBox="0 0 16 16" fill="none" stroke="#3a2a20" strokeWidth="1.500" aria-hidden="true">
          <path d="M5.500 5.500l5 5M10.500 5.500l-5 5" />
        </svg>
      </button>
    </div>
  </div>
);

const App: React.FC = () => (
  <div className="flex flex-col h-screen overflow-hidden">
    <TopBar />
    <div className="flex flex-1 min-h-0">
      <Dock />
      <div className="flex flex-col flex-1 min-w-0 bg-[#ecede8] text-[#444] font-['DejaVu_Sans_Condensed','DejaVu_Sans',sans-serif] text-[13px]">
        <TitleBar />
        <MenuBar />
        <MainToolbar />
        <LayerToolbar />
        <div className="flex flex-1 min-h-0">
          <ToolPalette />
          <SheetsPanel />
          <Editor />
        </div>
        <StatusBar />
      </div>
    </div>
  </div>
);

export default App;
